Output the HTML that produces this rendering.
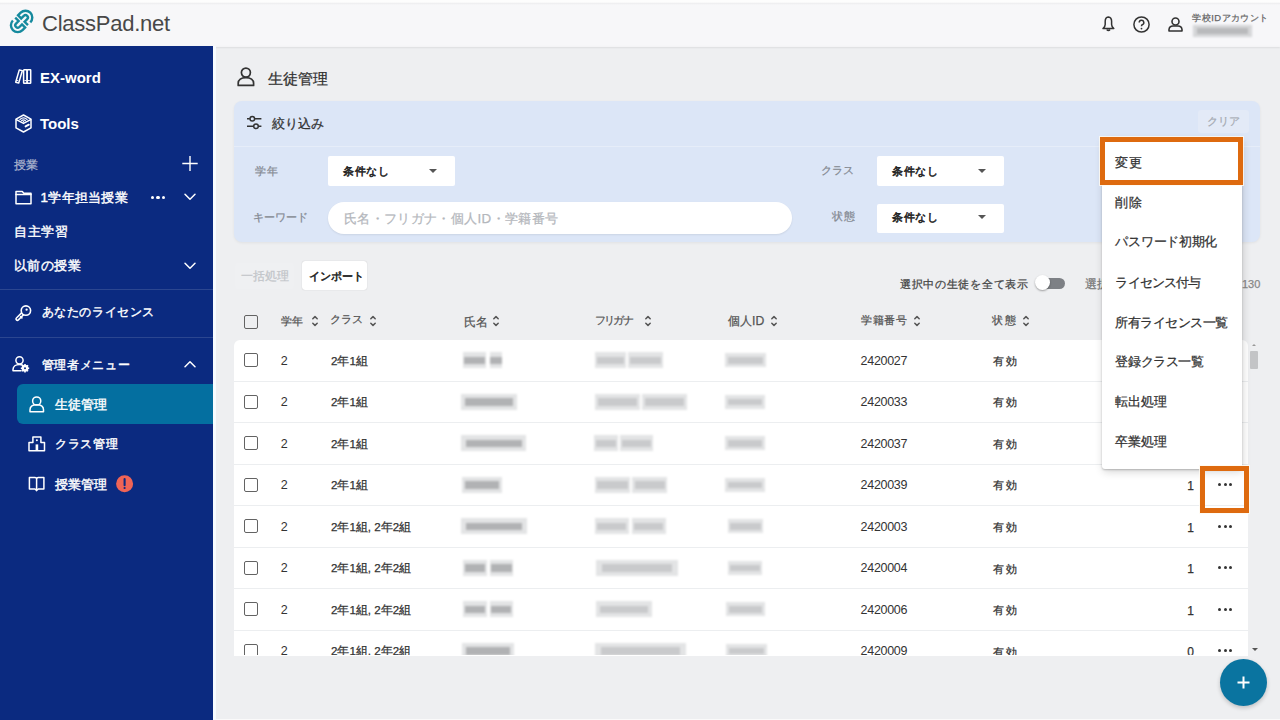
<!DOCTYPE html>
<html><head><meta charset="utf-8">
<style>
*{box-sizing:border-box;margin:0;padding:0}
html,body{width:1280px;height:720px;overflow:hidden}
body{position:relative;background:#eeeff1;font-family:"Liberation Sans",sans-serif;color:#333}
.a{position:absolute;white-space:nowrap;-webkit-text-stroke:0.25px currentColor}
svg{position:absolute;overflow:visible}
#top{position:absolute;left:0;top:0;width:1280px;height:47px;background:linear-gradient(#fdfdfd 0,#fdfdfd 2px,#efeff1 3.5px,#f7f7f9 5px,#f7f7f9 45px,#f3f3f5 47px);box-shadow:0 1px 1.5px rgba(0,0,0,.07)}
#side{position:absolute;left:0;top:46px;width:213px;height:674px;background:#0b2a80}
#strip{position:absolute;left:213px;top:46px;width:2.5px;height:674px;background:#f8fcff}
.sdiv{position:absolute;left:0;width:213px;height:1px;background:#2b4690}
#active{position:absolute;left:17px;top:384px;width:196px;height:40px;background:#046fa0;border-radius:6px 0 0 6px}
#card{position:absolute;left:234px;top:101px;width:1026px;height:141px;background:#dce6f7;border-radius:8px;box-shadow:0 1px 3px rgba(0,0,0,.06)}
#carddiv{position:absolute;left:234px;top:146px;width:1026px;height:1px;background:#e6edf9}
.sel{position:absolute;background:#fff;border-radius:2px}
.tri{position:absolute;width:0;height:0;border-left:4px solid transparent;border-right:4px solid transparent;border-top:4px solid #555}
#kw{position:absolute;left:328px;top:202px;width:464px;height:32px;background:#fff;border-radius:16px;box-shadow:0 1px 2px rgba(0,0,0,.08)}
#table{position:absolute;left:234px;top:339.5px;width:1014px;height:316px;background:#fff;border-radius:6px 6px 0 0;overflow:hidden}
.row{position:absolute;left:0;width:1014px;height:1px;background:#eceef0}
.cb{position:absolute;width:14px;height:14px;border:1.7px solid #636363;border-radius:2px}
.blur{position:absolute;background:#e3e4e5;filter:blur(1.1px)}
.blur::after{content:'';position:absolute;left:7%;right:7%;top:28%;height:48%;background:#b1b2b4}
.blur.k::after{background:#c9cacc}
.blur.t{background:#d5d6d8}.blur.t::after{background:#b9babc;top:22%;height:56%}
#menu{position:absolute;left:1102px;top:138px;width:140px;height:330.5px;background:#fff;border-radius:3px;box-shadow:0 1px 2px rgba(0,0,0,.22),1px 3px 8px rgba(0,0,0,.16)}
.orange{position:absolute;border:5px solid #de6a0f;box-shadow:0 0 0 1px rgba(255,250,240,.8)}
#fab{position:absolute;left:1220px;top:659px;width:47px;height:47px;border-radius:50%;background:#0a74a0;box-shadow:0 2px 4px rgba(0,0,0,.2)}
.dots{position:absolute;width:14px;height:3px}
.dots i{position:absolute;top:0;width:3px;height:3px;border-radius:50%;background:#333}
.dots i:nth-child(1){left:0}.dots i:nth-child(2){left:5.5px}.dots i:nth-child(3){left:11px}
#tcells{position:absolute;left:0;top:0;width:1280px;height:655px;overflow:hidden}
.sdots{position:absolute;width:15px;height:4px}
.sdots i{position:absolute;top:0;width:3.4px;height:3.4px;border-radius:50%;background:#fff}
.sdots i:nth-child(1){left:0}.sdots i:nth-child(2){left:5.4px}.sdots i:nth-child(3){left:10.8px}
</style></head><body>
<div id="top"></div>
<svg style="left:0;top:0" width="44" height="44"><g transform="translate(21.6 21.4) rotate(45)" fill="none" stroke="#168a9e" stroke-width="2.4" stroke-linejoin="miter"><path d="M6.8 -6.3 L6.8 -5.5 A6.8 6.8 0 0 0 -6.8 -5.5 L-6.8 -1.8 L-2.4 -1.8 L-2.4 -5.5 A2.4 2.4 0 0 1 2.4 -5.5 L2.4 -1.8 L7.2 -1.8"/><path d="M-6.8 6.3 L-6.8 5.5 A6.8 6.8 0 0 0 6.8 5.5 L6.8 1.8 L2.4 1.8 L2.4 5.5 A2.4 2.4 0 0 1 -2.4 5.5 L-2.4 1.8 L-7.2 1.8"/></g></svg>
<div class="a" style="left:42px;top:10.8px;font-size:22px;line-height:22px;color:#484848;letter-spacing:-0.25px;line-height:26px;-webkit-text-stroke:0">ClassPad.net</div>
<svg style="left:1102px;top:16px" width="13" height="16" viewBox="0 0 13 16"><path d="M6.3 0.9 C4.4 1.2 3.2 3 3.2 5.2 V8.4 C3.2 10.1 2.3 11.4 1 12.6 H11.8 C10.5 11.4 9.6 10.1 9.6 8.4 V5.2 C9.6 3 8.3 1.2 6.3 0.9 Z" fill="none" stroke="#333" stroke-width="1.5" stroke-linejoin="round"/><path d="M4.6 13.6 Q6.4 15.6 8.2 13.6" fill="#333" stroke="#333" stroke-width="1.2"/></svg>
<svg style="left:1133.3px;top:15.8px" width="17" height="17" viewBox="0 0 17 17"><circle cx="8.5" cy="8.5" r="7.6" fill="none" stroke="#333" stroke-width="1.5"/><path d="M6.2 6.6 A2.3 2.3 0 1 1 9.3 8.7 C8.7 9 8.5 9.4 8.5 10.3" fill="none" stroke="#333" stroke-width="1.5"/><circle cx="8.5" cy="12.6" r="0.9" fill="#333"/></svg>
<svg style="left:1168px;top:16.5px" width="15" height="15" viewBox="0 0 15 15"><circle cx="7.5" cy="4.5" r="3.5" fill="none" stroke="#333" stroke-width="1.6"/><path d="M1 14 V12.5 A4 4 0 0 1 5 9 H10 A4 4 0 0 1 14 12.5 V14 Z" fill="none" stroke="#333" stroke-width="1.6" stroke-linejoin="round"/></svg>
<div class="a" style="left:1192.4px;top:12.8px;font-size:9.4px;line-height:9.4px;color:#666;letter-spacing:0.44px">学校IDアカウント</div>
<div class="blur t" style="left:1193px;top:25px;width:59px;height:12px"></div>
<div id="side"></div><div id="strip"></div>
<div class="a" style="left:40px;top:68.5px;font-size:15px;line-height:15px;color:#fff;font-weight:bold;-webkit-text-stroke:0;line-height:18px">EX-word</div>
<div class="a" style="left:40px;top:115px;font-size:15px;line-height:15px;color:#fff;font-weight:bold;-webkit-text-stroke:0;line-height:18px">Tools</div>
<div class="a" style="left:14px;top:158.5px;font-size:11.7px;line-height:11.7px;color:#aeb6cf">授業</div>
<div class="a" style="left:40.6px;top:191px;font-size:13.4px;line-height:13.4px;color:#fff;letter-spacing:0.25px;-webkit-text-stroke:0.4px #fff">1学年担当授業</div>
<div class="a" style="left:14.2px;top:225.2px;font-size:13.3px;line-height:13.3px;color:#fff;letter-spacing:0.47px;-webkit-text-stroke:0.4px #fff">自主学習</div>
<div class="a" style="left:14px;top:259.2px;font-size:13.3px;line-height:13.3px;color:#fff;letter-spacing:0.45px;-webkit-text-stroke:0.4px #fff">以前の授業</div>
<div class="sdiv" style="top:289px"></div>
<div class="a" style="left:41.6px;top:305.6px;font-size:12.16px;line-height:12.16px;color:#fff;letter-spacing:0.6px;-webkit-text-stroke:0.4px #fff">あなたのライセンス</div>
<div class="sdiv" style="top:337px"></div>
<div class="a" style="left:41.6px;top:358.6px;font-size:12.3px;line-height:12.3px;color:#fff;letter-spacing:0.7px;-webkit-text-stroke:0.4px #fff">管理者メニュー</div>
<div id="active"></div>
<div class="a" style="left:55.4px;top:398.4px;font-size:13.2px;line-height:13.2px;color:#fff;-webkit-text-stroke:0.4px #fff">生徒管理</div>
<div class="a" style="left:54.8px;top:438px;font-size:12.35px;line-height:12.35px;color:#fff;letter-spacing:0.8px;-webkit-text-stroke:0.4px #fff">クラス管理</div>
<div class="a" style="left:55px;top:478px;font-size:13.45px;line-height:13.45px;color:#fff;-webkit-text-stroke:0.4px #fff">授業管理</div>
<svg style="left:14px;top:69px" width="18" height="15" viewBox="0 0 18 15"><g fill="none" stroke="#fff" stroke-width="1.5" stroke-linecap="round" stroke-linejoin="round" stroke-width="1.6"><path d="M5.3 0.9 L8.3 1.7 L4.7 14.1 L1.7 13.3 Z"/><rect x="9.6" y="0.8" width="3.5" height="13.4" rx="0.5"/><rect x="13.1" y="0.8" width="3.6" height="13.4" rx="0.5"/></g><g stroke="#fff" stroke-width="1" stroke-linecap="round"><path d="M2.7 11.4 L3.9 11.7 M10.8 11.6 H11.9 M14.3 11.6 H15.5"/></g></svg>
<svg style="left:15px;top:114px" width="17" height="19" viewBox="0 0 17 19"><g fill="none" stroke="#fff" stroke-width="1.5" stroke-linecap="round" stroke-linejoin="round" stroke-width="1.8"><path d="M8.5 1 L16 5.2 V13.8 L8.5 18 L1 13.8 V5.2 Z"/><path d="M1.4 5.6 L8.5 9.4 L15.6 5.6"/></g><g fill="none" stroke="#fff" stroke-width="1.3" stroke-linecap="round"><path d="M4.9 5.4 Q8.5 2.4 12.1 5.4"/><path d="M6.7 6.6 Q8.5 5.1 10.3 6.6"/></g><circle cx="8.5" cy="7.7" r="0.8" fill="#fff"/><path d="M10.6 12.4 L13.8 10.7" stroke="#fff" stroke-width="2" stroke-linecap="round"/></svg>
<svg style="left:182px;top:156px" width="16" height="15" viewBox="0 0 16 15"><path d="M8 0 V15 M0.3 7.5 H15.7" stroke="#fff" stroke-width="1.4"/></svg>
<svg style="left:15px;top:190px" width="17" height="15" viewBox="0 0 17 15"><g fill="none" stroke="#fff" stroke-width="1.5" stroke-linecap="round" stroke-linejoin="round" stroke-width="1.7"><path d="M1 1.5 H7.3 L8.8 3.2 H16 V13.8 H1 Z"/><path d="M1 4.6 H16"/></g></svg>
<div class="sdots" style="left:151px;top:196px"><i></i><i></i><i></i></div>
<svg style="left:184px;top:193px" width="12" height="8" viewBox="0 0 12 8"><path d="M1 1.2 L6 6.2 L11 1.2" fill="none" stroke="#fff" stroke-width="1.5" stroke-linecap="round" stroke-linejoin="round" stroke-width="1.6"/></svg>
<svg style="left:184px;top:262px" width="12" height="8" viewBox="0 0 12 8"><path d="M1 1.2 L6 6.2 L11 1.2" fill="none" stroke="#fff" stroke-width="1.5" stroke-linecap="round" stroke-linejoin="round" stroke-width="1.6"/></svg>
<svg style="left:15px;top:305px" width="17" height="17" viewBox="0 0 17 17"><path d="M7.6 8.7 L2.4 13.9" stroke="#fff" stroke-width="4.3" stroke-linecap="round"/><path d="M6.7 9.6 L2.4 13.9" stroke="#0b2a80" stroke-width="1.2" stroke-linecap="round"/><path d="M5.6 11.6 L6.9 12.9" stroke="#fff" stroke-width="1.6" stroke-linecap="round"/><circle cx="10.9" cy="5.6" r="4.7" fill="#0b2a80" stroke="#fff" stroke-width="1.6"/><circle cx="11.6" cy="4.7" r="1.15" fill="#fff"/></svg>
<svg style="left:12px;top:356px" width="18" height="17" viewBox="0 0 18 17"><g fill="none" stroke="#fff" stroke-width="1.5" stroke-linecap="round" stroke-linejoin="round" stroke-width="1.5"><circle cx="7.5" cy="4.3" r="3.6"/><path d="M10.6 9.2 C9.8 8.7 8.8 8.4 7.5 8.4 C3.8 8.4 1 10.5 1 13.5 V14.8 H9"/></g><circle cx="13" cy="12.2" r="3.4" fill="#fff"/><g stroke="#fff" stroke-width="1.6"><path d="M13 8 V16.4 M8.8 12.2 H17.2 M10 9.2 L16 15.2 M16 9.2 L10 15.2"/></g><circle cx="13" cy="12.2" r="1" fill="#0b2a80"/></svg>
<svg style="left:184px;top:360px" width="12" height="8" viewBox="0 0 12 8"><path d="M1 6.8 L6 1.8 L11 6.8" fill="none" stroke="#fff" stroke-width="1.5" stroke-linecap="round" stroke-linejoin="round" stroke-width="1.6"/></svg>
<svg style="left:29px;top:396px" width="16" height="17" viewBox="0 0 16 17"><g fill="none" stroke="#fff" stroke-width="1.5" stroke-linecap="round" stroke-linejoin="round" stroke-width="1.5"><circle cx="7.7" cy="5" r="4.1"/><path d="M1 15.8 V13.8 C1 10.8 3.6 8.8 7.7 8.8 C11.8 8.8 14.5 10.8 14.5 13.8 V15.8 Z"/></g></svg>
<svg style="left:28px;top:436px" width="18" height="16" viewBox="0 0 18 16"><g fill="none" stroke="#fff" stroke-width="1.5" stroke-linecap="round" stroke-linejoin="round" stroke-width="1.6"><path d="M4.9 1 H12.9 V6.6 H16.5 V14.8 H1 V6.6 H4.9 Z"/></g><circle cx="8.9" cy="4.3" r="1" fill="#fff"/><rect x="7.6" y="8.4" width="2.6" height="6.6" fill="#fff"/></svg>
<svg style="left:28px;top:476px" width="18" height="17" viewBox="0 0 18 17"><g fill="none" stroke="#fff" stroke-width="1.5" stroke-linecap="round" stroke-linejoin="round" stroke-width="1.6"><path d="M1.4 1.4 H7 C7.8 1.4 8.6 2 8.6 2.8 C8.6 2 9.4 1.4 10.2 1.4 H15.9 V12.9 H10.2 L8.6 14.6 L7 12.9 H1.4 Z"/><path d="M8.6 2.8 V13.6"/></g></svg>
<svg style="left:116px;top:475px" width="18" height="18" viewBox="0 0 18 18"><circle cx="8.6" cy="8.75" r="8.5" fill="#ef6456"/><path d="M8.6 4 V10.2" stroke="#0b2a80" stroke-width="2.1" stroke-linecap="round"/><circle cx="8.6" cy="13" r="1.1" fill="#0b2a80"/></svg>
<svg style="left:237px;top:67px" width="18" height="20" viewBox="0 0 18 20"><g fill="none" stroke="#333" stroke-width="1.7" stroke-linejoin="round"><circle cx="8.9" cy="5.6" r="4.5"/><path d="M1.2 18.4 V16.2 C1.2 12.9 4.1 10.6 8.9 10.6 C13.7 10.6 16.6 12.9 16.6 16.2 V18.4 Z"/></g></svg>
<div class="a" style="left:268.4px;top:71.2px;font-size:15.0px;line-height:15.0px;color:#333">生徒管理</div>
<div id="card"></div><div id="carddiv"></div>
<svg style="left:246px;top:115px" width="17" height="14" viewBox="0 0 17 14"><g fill="none" stroke="#333" stroke-width="1.5"><path d="M1 3.75 H3.8 M8.8 3.75 H15.4"/><circle cx="6.3" cy="3.75" r="2.3"/><path d="M1 11.25 H7.5 M12.5 11.25 H15.4"/><circle cx="10" cy="11.25" r="2.3"/></g></svg>
<div class="a" style="left:272px;top:117.8px;font-size:12.6px;line-height:12.6px;color:#333">絞り込み</div>
<div class="a" style="left:1198px;top:110px;width:51px;height:23px;background:#e3eaf7;border-radius:3px"></div>
<div class="a" style="left:1207px;top:116px;font-size:11px;line-height:11px;color:#a6abb3">クリア</div>
<div class="a" style="left:254.7px;top:166.2px;font-size:11.4px;line-height:11.4px;color:#858a93;letter-spacing:0.9px">学年</div>
<div class="a" style="left:253.2px;top:212.4px;font-size:11.3px;line-height:11.3px;color:#858a93">キーワード</div>
<div class="a" style="left:821.4px;top:165px;font-size:11.2px;line-height:11.2px;color:#858a93">クラス</div>
<div class="a" style="left:831.9px;top:211px;font-size:11.0px;line-height:11.0px;color:#858a93;letter-spacing:1px">状態</div>
<div class="sel" style="left:328px;top:156px;width:127px;height:30px"></div>
<div class="sel" style="left:877px;top:156px;width:127px;height:30px"></div>
<div class="sel" style="left:877px;top:204px;width:127px;height:29px"></div>
<div class="a" style="left:343px;top:166.2px;font-size:11.4px;line-height:11.4px;color:#222;letter-spacing:0.57px;-webkit-text-stroke:0.55px #222">条件なし</div>
<div class="a" style="left:892px;top:166.2px;font-size:11.4px;line-height:11.4px;color:#222;letter-spacing:0.57px;-webkit-text-stroke:0.55px #222">条件なし</div>
<div class="a" style="left:892px;top:212.2px;font-size:11.4px;line-height:11.4px;color:#222;letter-spacing:0.57px;-webkit-text-stroke:0.55px #222">条件なし</div>
<div class="tri" style="left:429px;top:169px"></div>
<div class="tri" style="left:978px;top:169px"></div>
<div class="tri" style="left:978px;top:215px"></div>
<div id="kw"></div>
<div class="a" style="left:344px;top:212px;font-size:13.4px;line-height:13.4px;color:#b4b7bc;letter-spacing:0.35px">氏名・フリガナ・個人ID・学籍番号</div>
<div class="a" style="left:235px;top:263px;width:59px;height:26px;background:#eff0f2;border-radius:3px"></div>
<div class="a" style="left:241.3px;top:270px;font-size:12.2px;line-height:12.2px;color:#c2c5c9">一括処理</div>
<div class="a" style="left:302px;top:261px;width:65px;height:29px;background:#fff;border-radius:3px;box-shadow:0 0 1px rgba(0,0,0,.25)"></div>
<div class="a" style="left:309.3px;top:270.5px;font-size:11px;line-height:11px;color:#222;-webkit-text-stroke:0.55px #222">インポート</div>
<div class="a" style="left:899.8px;top:279px;font-size:11.4px;line-height:11.4px;color:#444;letter-spacing:0.74px">選択中の生徒を全て表示</div>
<div class="a" style="left:1043px;top:278px;width:22px;height:11px;border-radius:6px;background:#7d8085"></div>
<div class="a" style="left:1035px;top:275px;width:15px;height:15px;border-radius:50%;background:#fff;box-shadow:0 1px 2px rgba(0,0,0,.35)"></div>
<div class="a" style="left:1085px;top:278px;font-size:12px;line-height:12px;color:#777">選択</div>
<div class="a" style="left:1242px;top:279px;font-size:11px;line-height:11px;color:#888">130</div>
<div class="cb" style="left:244px;top:315px"></div>
<div class="a" style="left:281px;top:315.5px;font-size:10.8px;line-height:10.8px;color:#555">学年</div>
<div class="a" style="left:330.2px;top:314.1px;font-size:11.1px;line-height:11.1px;color:#555">クラス</div>
<div class="a" style="left:463.5px;top:315.5px;font-size:12.4px;line-height:12.4px;color:#555">氏名</div>
<div class="a" style="left:595.3px;top:314.7px;font-size:11.2px;line-height:11.2px;color:#555;letter-spacing:-1.9px">フリガナ</div>
<div class="a" style="left:728px;top:314.7px;font-size:12.2px;line-height:12.2px;color:#555">個人ID</div>
<div class="a" style="left:861px;top:315.3px;font-size:11.4px;line-height:11.4px;color:#555;letter-spacing:0.57px">学籍番号</div>
<div class="a" style="left:992.3px;top:314.9px;font-size:10.95px;line-height:10.95px;color:#555;letter-spacing:1.4px">状態</div>
<svg style="left:311.5px;top:315px" width="6" height="12" viewBox="0 0 6 12"><g fill="none" stroke="#555" stroke-width="1.5" stroke-linecap="round" stroke-linejoin="round"><path d="M0.8 3.8 L3 1.6 L5.2 3.8 M0.8 8.2 L3 10.4 L5.2 8.2"/></g></svg>
<svg style="left:369.5px;top:315px" width="6" height="12" viewBox="0 0 6 12"><g fill="none" stroke="#555" stroke-width="1.5" stroke-linecap="round" stroke-linejoin="round"><path d="M0.8 3.8 L3 1.6 L5.2 3.8 M0.8 8.2 L3 10.4 L5.2 8.2"/></g></svg>
<svg style="left:493px;top:315px" width="6" height="12" viewBox="0 0 6 12"><g fill="none" stroke="#555" stroke-width="1.5" stroke-linecap="round" stroke-linejoin="round"><path d="M0.8 3.8 L3 1.6 L5.2 3.8 M0.8 8.2 L3 10.4 L5.2 8.2"/></g></svg>
<svg style="left:645px;top:315px" width="6" height="12" viewBox="0 0 6 12"><g fill="none" stroke="#555" stroke-width="1.5" stroke-linecap="round" stroke-linejoin="round"><path d="M0.8 3.8 L3 1.6 L5.2 3.8 M0.8 8.2 L3 10.4 L5.2 8.2"/></g></svg>
<svg style="left:770.5px;top:315px" width="6" height="12" viewBox="0 0 6 12"><g fill="none" stroke="#555" stroke-width="1.5" stroke-linecap="round" stroke-linejoin="round"><path d="M0.8 3.8 L3 1.6 L5.2 3.8 M0.8 8.2 L3 10.4 L5.2 8.2"/></g></svg>
<svg style="left:913.5px;top:315px" width="6" height="12" viewBox="0 0 6 12"><g fill="none" stroke="#555" stroke-width="1.5" stroke-linecap="round" stroke-linejoin="round"><path d="M0.8 3.8 L3 1.6 L5.2 3.8 M0.8 8.2 L3 10.4 L5.2 8.2"/></g></svg>
<svg style="left:1022.5px;top:315px" width="6" height="12" viewBox="0 0 6 12"><g fill="none" stroke="#555" stroke-width="1.5" stroke-linecap="round" stroke-linejoin="round"><path d="M0.8 3.8 L3 1.6 L5.2 3.8 M0.8 8.2 L3 10.4 L5.2 8.2"/></g></svg>
<div id="table"><div class="row" style="top:41.0px"></div><div class="row" style="top:82.5px"></div><div class="row" style="top:124.0px"></div><div class="row" style="top:165.5px"></div><div class="row" style="top:207.0px"></div><div class="row" style="top:248.5px"></div><div class="row" style="top:290.0px"></div></div>
<div id="tcells"><div class="cb" style="left:244px;top:353.2px"></div><div class="a" style="left:280.7px;top:354.9px;font-size:12.5px;line-height:12.5px;color:#333;-webkit-text-stroke:0">2</div><div class="a" style="left:331px;top:355.9px;font-size:11.55px;line-height:11.55px;color:#333">2年1組</div><div class="blur" style="left:462.7px;top:352.2px;width:23.8px;height:16px"></div><div class="blur" style="left:489.5px;top:352.2px;width:12.9px;height:16px"></div><div class="blur k" style="left:595.0px;top:352.2px;width:31.0px;height:16px"></div><div class="blur k" style="left:628.0px;top:352.2px;width:35.0px;height:16px"></div><div class="blur k" style="left:725.0px;top:353.2px;width:40.5px;height:14px"></div><div class="a" style="left:860.6px;top:354.9px;font-size:12.5px;line-height:12.5px;color:#333;letter-spacing:-0.3px;-webkit-text-stroke:0">2420027</div><div class="a" style="left:992.8px;top:355.9px;font-size:11px;line-height:11px;color:#333;letter-spacing:1.8px">有効</div><div class="cb" style="left:244px;top:394.8px"></div><div class="a" style="left:280.7px;top:396.4px;font-size:12.5px;line-height:12.5px;color:#333;-webkit-text-stroke:0">2</div><div class="a" style="left:331px;top:397.4px;font-size:11.55px;line-height:11.55px;color:#333">2年1組</div><div class="blur" style="left:461.3px;top:393.8px;width:55.3px;height:16px"></div><div class="blur k" style="left:595.0px;top:393.8px;width:44.7px;height:16px"></div><div class="blur k" style="left:641.8px;top:393.8px;width:44.9px;height:16px"></div><div class="blur k" style="left:725.0px;top:394.8px;width:40.0px;height:14px"></div><div class="a" style="left:860.6px;top:396.4px;font-size:12.5px;line-height:12.5px;color:#333;letter-spacing:-0.3px;-webkit-text-stroke:0">2420033</div><div class="a" style="left:992.8px;top:397.4px;font-size:11px;line-height:11px;color:#333;letter-spacing:1.8px">有効</div><div class="cb" style="left:244px;top:436.2px"></div><div class="a" style="left:280.7px;top:437.9px;font-size:12.5px;line-height:12.5px;color:#333;-webkit-text-stroke:0">2</div><div class="a" style="left:331px;top:438.9px;font-size:11.55px;line-height:11.55px;color:#333">2年1組</div><div class="blur" style="left:461.0px;top:435.2px;width:65.2px;height:16px"></div><div class="blur k" style="left:594.0px;top:435.2px;width:23.8px;height:16px"></div><div class="blur k" style="left:620.0px;top:435.2px;width:33.3px;height:16px"></div><div class="blur k" style="left:725.0px;top:436.2px;width:40.0px;height:14px"></div><div class="a" style="left:860.6px;top:437.9px;font-size:12.5px;line-height:12.5px;color:#333;letter-spacing:-0.3px;-webkit-text-stroke:0">2420037</div><div class="a" style="left:992.8px;top:438.9px;font-size:11px;line-height:11px;color:#333;letter-spacing:1.8px">有効</div><div class="cb" style="left:244px;top:477.8px"></div><div class="a" style="left:280.7px;top:479.4px;font-size:12.5px;line-height:12.5px;color:#333;-webkit-text-stroke:0">2</div><div class="a" style="left:331px;top:480.4px;font-size:11.55px;line-height:11.55px;color:#333">2年1組</div><div class="blur" style="left:462.0px;top:476.8px;width:39.6px;height:16px"></div><div class="blur k" style="left:595.0px;top:476.8px;width:35.0px;height:16px"></div><div class="blur k" style="left:632.2px;top:476.8px;width:34.8px;height:16px"></div><div class="blur k" style="left:725.0px;top:477.8px;width:40.0px;height:14px"></div><div class="a" style="left:860.6px;top:479.4px;font-size:12.5px;line-height:12.5px;color:#333;letter-spacing:-0.3px;-webkit-text-stroke:0">2420039</div><div class="a" style="left:992.8px;top:480.4px;font-size:11px;line-height:11px;color:#333;letter-spacing:1.8px">有効</div><div class="a" style="left:1180px;top:480.2px;width:14px;text-align:right;font-size:12px;line-height:12px;color:#333">1</div><div class="dots" style="left:1218px;top:483.2px"><i></i><i></i><i></i></div><div class="cb" style="left:244px;top:519.2px"></div><div class="a" style="left:280.7px;top:520.9px;font-size:12.5px;line-height:12.5px;color:#333;-webkit-text-stroke:0">2</div><div class="a" style="left:331px;top:521.9px;font-size:11.55px;line-height:11.55px;color:#333">2年1組, 2年2組</div><div class="blur" style="left:461.0px;top:518.2px;width:66.0px;height:16px"></div><div class="blur k" style="left:594.5px;top:518.2px;width:34.2px;height:16px"></div><div class="blur k" style="left:631.7px;top:518.2px;width:34.0px;height:16px"></div><div class="blur k" style="left:728.0px;top:519.2px;width:35.3px;height:14px"></div><div class="a" style="left:860.6px;top:520.9px;font-size:12.5px;line-height:12.5px;color:#333;letter-spacing:-0.3px;-webkit-text-stroke:0">2420003</div><div class="a" style="left:992.8px;top:522.0px;font-size:11px;line-height:11px;color:#333;letter-spacing:1.8px">有効</div><div class="a" style="left:1180px;top:521.8px;width:14px;text-align:right;font-size:12px;line-height:12px;color:#333">1</div><div class="dots" style="left:1218px;top:524.8px"><i></i><i></i><i></i></div><div class="cb" style="left:244px;top:560.8px"></div><div class="a" style="left:280.7px;top:562.4px;font-size:12.5px;line-height:12.5px;color:#333;-webkit-text-stroke:0">2</div><div class="a" style="left:331px;top:563.4px;font-size:11.55px;line-height:11.55px;color:#333">2年1組, 2年2組</div><div class="blur" style="left:463.0px;top:559.8px;width:23.5px;height:16px"></div><div class="blur" style="left:489.5px;top:559.8px;width:23.8px;height:16px"></div><div class="blur k" style="left:596.0px;top:559.8px;width:82.0px;height:16px"></div><div class="blur k" style="left:728.0px;top:560.8px;width:34.0px;height:14px"></div><div class="a" style="left:860.6px;top:562.4px;font-size:12.5px;line-height:12.5px;color:#333;letter-spacing:-0.3px;-webkit-text-stroke:0">2420004</div><div class="a" style="left:992.8px;top:563.5px;font-size:11px;line-height:11px;color:#333;letter-spacing:1.8px">有効</div><div class="a" style="left:1180px;top:563.2px;width:14px;text-align:right;font-size:12px;line-height:12px;color:#333">1</div><div class="dots" style="left:1218px;top:566.2px"><i></i><i></i><i></i></div><div class="cb" style="left:244px;top:602.2px"></div><div class="a" style="left:280.7px;top:603.9px;font-size:12.5px;line-height:12.5px;color:#333;-webkit-text-stroke:0">2</div><div class="a" style="left:331px;top:604.9px;font-size:11.55px;line-height:11.55px;color:#333">2年1組, 2年2組</div><div class="blur" style="left:463.0px;top:601.2px;width:23.5px;height:16px"></div><div class="blur" style="left:489.5px;top:601.2px;width:23.5px;height:16px"></div><div class="blur k" style="left:596.0px;top:601.2px;width:56.0px;height:16px"></div><div class="blur k" style="left:726.0px;top:602.2px;width:39.0px;height:14px"></div><div class="a" style="left:860.6px;top:603.9px;font-size:12.5px;line-height:12.5px;color:#333;letter-spacing:-0.3px;-webkit-text-stroke:0">2420006</div><div class="a" style="left:992.8px;top:605.0px;font-size:11px;line-height:11px;color:#333;letter-spacing:1.8px">有効</div><div class="a" style="left:1180px;top:604.8px;width:14px;text-align:right;font-size:12px;line-height:12px;color:#333">1</div><div class="dots" style="left:1218px;top:607.8px"><i></i><i></i><i></i></div><div class="cb" style="left:244px;top:643.8px"></div><div class="a" style="left:280.7px;top:645.4px;font-size:12.5px;line-height:12.5px;color:#333;-webkit-text-stroke:0">2</div><div class="a" style="left:331px;top:646.4px;font-size:11.55px;line-height:11.55px;color:#333">2年1組, 2年2組</div><div class="blur" style="left:462.0px;top:642.8px;width:51.9px;height:16px"></div><div class="blur k" style="left:595.0px;top:642.8px;width:91.0px;height:16px"></div><div class="blur k" style="left:726.0px;top:643.8px;width:41.0px;height:14px"></div><div class="a" style="left:860.6px;top:645.4px;font-size:12.5px;line-height:12.5px;color:#333;letter-spacing:-0.3px;-webkit-text-stroke:0">2420009</div><div class="a" style="left:992.8px;top:646.5px;font-size:11px;line-height:11px;color:#333;letter-spacing:1.8px">有効</div><div class="a" style="left:1180px;top:646.2px;width:14px;text-align:right;font-size:12px;line-height:12px;color:#333">0</div><div class="dots" style="left:1218px;top:649.2px"><i></i><i></i><i></i></div></div>
<div id="menu"></div>
<div class="a" style="left:1115.4px;top:156px;font-size:13.3px;line-height:13.3px;color:#333;letter-spacing:0.5px">変更</div>
<div class="a" style="left:1115.4px;top:196px;font-size:13.3px;line-height:13.3px;color:#333;letter-spacing:0.5px">削除</div>
<div class="a" style="left:1115.4px;top:236px;font-size:12.95px;line-height:12.95px;color:#333;letter-spacing:-0.28px">パスワード初期化</div>
<div class="a" style="left:1115.4px;top:276.8px;font-size:12.5px;line-height:12.5px;color:#333;letter-spacing:-0.83px">ライセンス付与</div>
<div class="a" style="left:1115.4px;top:316.8px;font-size:12.5px;line-height:12.5px;color:#333;letter-spacing:-0.52px">所有ライセンス一覧</div>
<div class="a" style="left:1115.4px;top:356px;font-size:12.5px;line-height:12.5px;color:#333;letter-spacing:-0.43px">登録クラス一覧</div>
<div class="a" style="left:1115.4px;top:396px;font-size:12.97px;line-height:12.97px;color:#333">転出処理</div>
<div class="a" style="left:1115.4px;top:436px;font-size:12.97px;line-height:12.97px;color:#333">卒業処理</div>
<div class="orange" style="left:1100px;top:137px;width:143px;height:48px"></div>
<div class="orange" style="left:1200px;top:466px;width:49px;height:47px"></div>
<div class="a" style="left:216px;top:719px;width:1064px;height:1px;background:#fafafa"></div>
<div id="fab"></div>
<svg style="left:1237px;top:676px" width="13" height="13" viewBox="0 0 13 13"><path d="M6.5 0.5 V12.5 M0.5 6.5 H12.5" stroke="#fff" stroke-width="2"/></svg>
<div class="a" style="left:1250px;top:351px;width:8px;height:18px;background:#c3c4c6;border-radius:1px"></div>
<div class="tri" style="left:1252px;top:344px;border-left-width:2.5px;border-right-width:2.5px;border-top:0;border-bottom:2.5px solid #999"></div>
<div class="tri" style="left:1251.5px;top:648px;border-left-width:3px;border-right-width:3px;border-top-width:3px;border-top-color:#555"></div>
</body></html>
